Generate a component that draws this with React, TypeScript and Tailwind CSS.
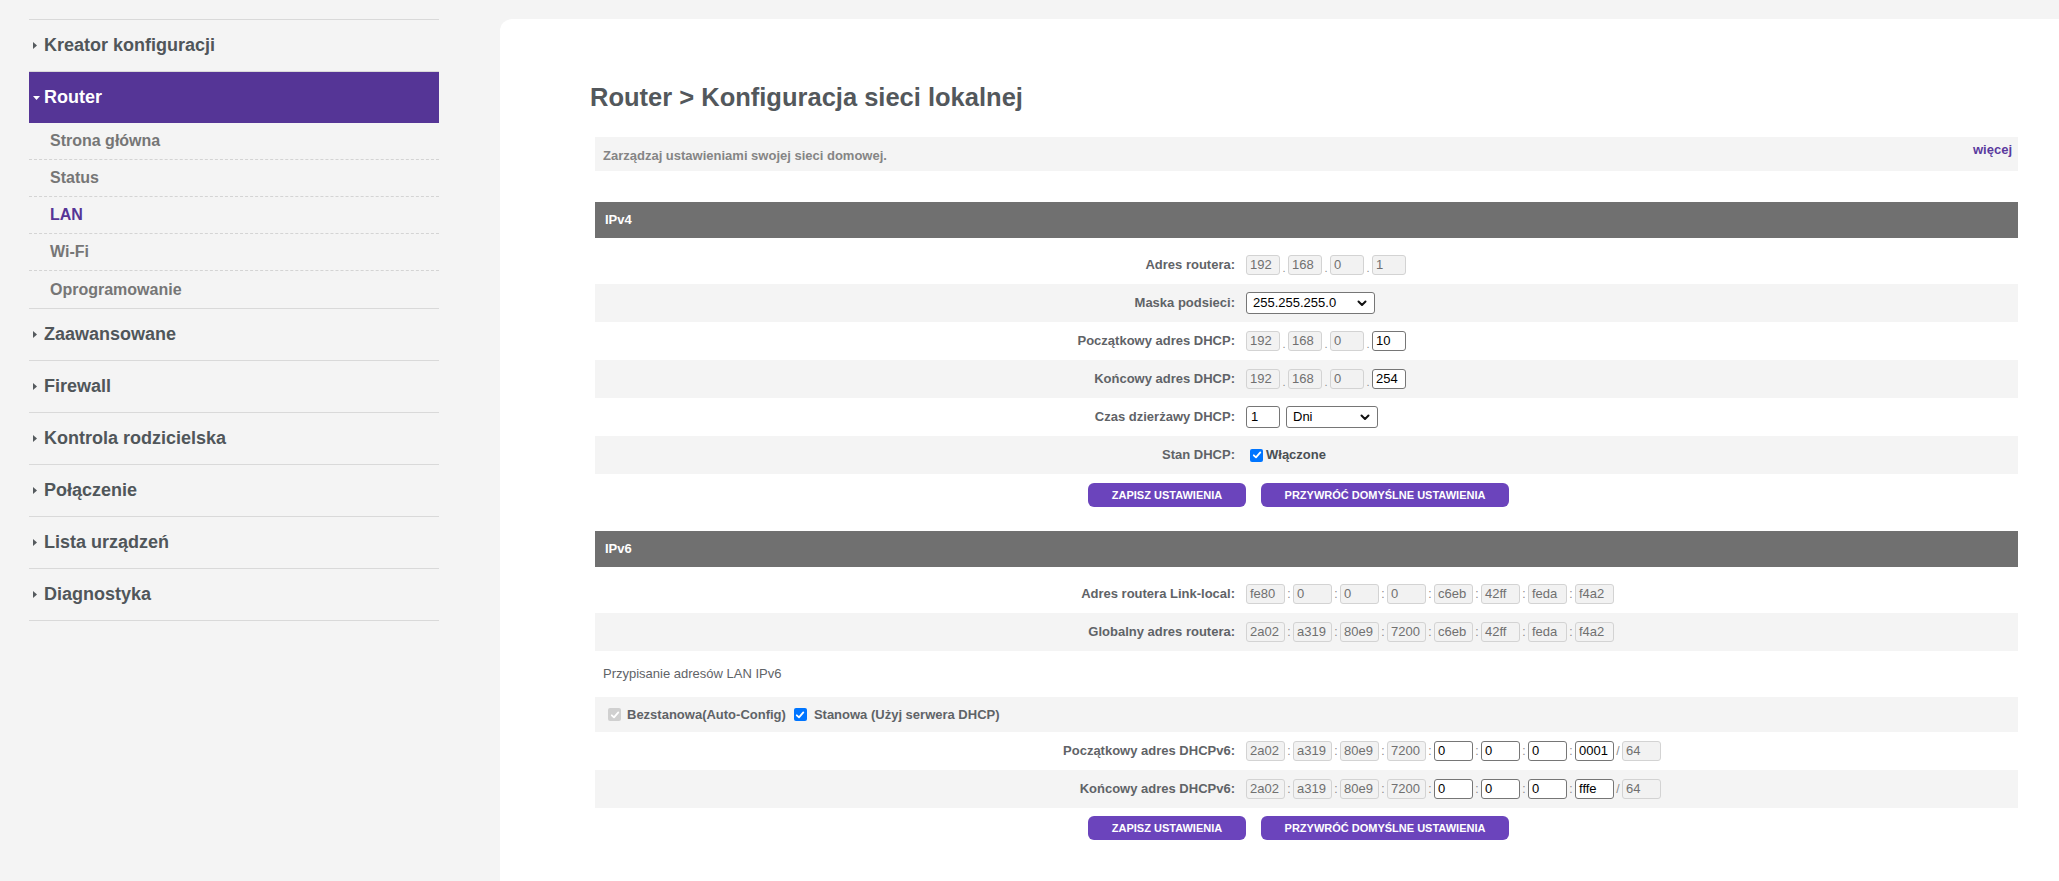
import React from "react";

type Cell = { v: string; on?: boolean };

const Box = ({ v, on, wide }: { v: string; on?: boolean; wide?: boolean }) => (
  <div
    className={[
      "h-[20px] rounded-[3px] border px-[3px] text-[13px] font-normal leading-[18px] whitespace-nowrap overflow-hidden",
      wide ? "w-[39px]" : "w-[34px]",
      on ? "border-[#767676] bg-white text-black" : "border-[#d3d3d3] bg-[#f2f2f2] text-[#707070]",
    ].join(" ")}
  >
    {v}
  </div>
);

const Dot = () => (
  <span className="flex h-[20px] w-[8px] items-end justify-center pb-[1px] text-[11px] leading-[11px] text-[#8a8a8a]">.</span>
);

const Colon = ({ ch = ":" }: { ch?: string }) => (
  <span className="flex h-[20px] w-[8px] items-center justify-center text-[12px] leading-[12px] text-[#8a8a8a]">{ch}</span>
);

const Chevron = () => (
  <svg width="10" height="7" viewBox="0 0 10 7" className="shrink-0">
    <path d="M1.5 1.5 L5 5 L8.5 1.5" fill="none" stroke="#111" strokeWidth="2" strokeLinecap="round" strokeLinejoin="round" />
  </svg>
);

const Select = ({ v, w }: { v: string; w: string }) => (
  <div
    className={`flex h-[22px] items-center justify-between rounded-[3px] border border-[#767676] bg-white pl-[6px] pr-[7px] text-[13px] font-normal text-black ${w}`}
  >
    <span>{v}</span>
    <Chevron />
  </div>
);

const Check = ({ disabled }: { disabled?: boolean }) => (
  <span
    className={`inline-flex h-[13px] w-[13px] shrink-0 items-center justify-center rounded-[2px] ${
      disabled ? "bg-[#d0d0d0]" : "bg-[#0075ff]"
    }`}
  >
    <svg viewBox="0 0 10 10" className="h-[10px] w-[10px]">
      <path d="M1.8 5.3 L4 7.4 L8.3 2.4" fill="none" stroke="#fff" strokeWidth="1.8" strokeLinecap="round" strokeLinejoin="round" />
    </svg>
  </span>
);

const Row = ({ label, gray, children }: { label: string; gray?: boolean; children: React.ReactNode }) => (
  <div className={`grid h-[38px] grid-cols-[651px_1fr] items-center ${gray ? "bg-[#f4f4f4]" : ""}`}>
    <div className="pr-[11px] text-right text-[13px] font-bold text-[#5f6367]">{label}</div>
    <div className="flex items-center">{children}</div>
  </div>
);

const Header = ({ title }: { title: string }) => (
  <div className="flex h-[36px] items-center bg-[#707070] pl-[10px] text-[13px] font-bold text-white">{title}</div>
);

const Buttons = () => (
  <div className="flex justify-center gap-[15px] pr-[16px]">
    <button className="h-[24px] w-[158px] rounded-[6px] bg-[#6b44bc] text-[11px] font-bold text-white">ZAPISZ USTAWIENIA</button>
    <button className="h-[24px] w-[248px] rounded-[6px] bg-[#6b44bc] text-[11px] font-bold text-white">PRZYWRÓĆ DOMYŚLNE USTAWIENIA</button>
  </div>
);

const Ipv4 = ({ parts }: { parts: Cell[] }) => (
  <>
    {parts.map((p, i) => (
      <React.Fragment key={i}>
        {i > 0 && <Dot />}
        <Box v={p.v} on={p.on} />
      </React.Fragment>
    ))}
  </>
);

const Ipv6 = ({ parts, prefix }: { parts: Cell[]; prefix?: boolean }) => (
  <>
    {parts.map((p, i) => (
      <React.Fragment key={i}>
        {i > 0 && <Colon />}
        <Box v={p.v} on={p.on} wide />
      </React.Fragment>
    ))}
    {prefix && (
      <>
        <Colon ch="/" />
        <Box v="64" wide />
      </>
    )}
  </>
);

const cells = (vals: string[], onFrom = 99): Cell[] => vals.map((v, i) => ({ v, on: i >= onFrom }));

const RightArrow = () => (
  <svg width="4" height="7" viewBox="0 0 4 7">
    <path d="M0 0 L4 3.5 L0 7 Z" fill="#555a5e" />
  </svg>
);

const DownArrow = () => (
  <svg width="7" height="4" viewBox="0 0 7 4">
    <path d="M0 0 L7 0 L3.5 4 Z" fill="#fff" />
  </svg>
);

const TopItem = ({ label }: { label: string }) => (
  <div className="flex h-[52px] items-center border-b border-[#d9d9d9] pl-[4px] text-[18px] font-bold text-[#50565a]">
    <span className="flex w-[11px] items-center">
      <RightArrow />
    </span>
    {label}
  </div>
);

const subItems = ["Strona główna", "Status", "LAN", "Wi-Fi", "Oprogramowanie"];

const Sidebar = () => (
  <aside className="w-[439px] shrink-0 pl-[29px] pt-[19px]">
    <div className="border-t border-[#d9d9d9]">
      <TopItem label="Kreator konfiguracji" />
      <div className="flex h-[51px] items-center bg-[#553596] pl-[4px] text-[18px] font-bold text-white">
        <span className="flex w-[11px] items-center">
          <DownArrow />
        </span>
        Router
      </div>
      <div className="border-b border-[#d9d9d9]">
        {subItems.map((s, i) => (
          <div
            key={s}
            className={`flex h-[37px] items-center pl-[21px] text-[16px] font-bold ${
              i < subItems.length - 1 ? "border-b border-dashed border-[#d4d4d4]" : "h-[36px]"
            } ${s === "LAN" ? "text-[#553596]" : "text-[#767676]"}`}
          >
            {s}
          </div>
        ))}
      </div>
      {["Zaawansowane", "Firewall", "Kontrola rodzicielska", "Połączenie", "Lista urządzeń", "Diagnostyka"].map((l) => (
        <TopItem key={l} label={l} />
      ))}
    </div>
  </aside>
);

export default function App() {
  return (
    <div className="flex h-[881px] overflow-hidden bg-[#f4f4f4] font-['Liberation_Sans',Arial,sans-serif]">
      <Sidebar />
      <main className="ml-[61px] mt-[19px] flex-1 rounded-tl-[12px] bg-white pl-[95px] pr-[41px] pt-[63px]">
        <h1 className="-ml-[5px] text-[25.5px] font-bold leading-[30px] text-[#53585c]">Router &gt; Konfiguracja sieci lokalnej</h1>

        <div className="mt-[25px] flex h-[34px] items-start justify-between bg-[#f4f4f4]">
          <span className="pl-[8px] pt-[9px] text-[13px] font-bold text-[#858585]">Zarządzaj ustawieniami swojej sieci domowej.</span>
          <span className="pr-[6px] pt-[3px] text-[13px] font-bold text-[#5a3a9e]">więcej</span>
        </div>

        <section className="mt-[31px]">
          <Header title="IPv4" />
          <div className="pt-[8px]">
            <Row label="Adres routera:">
              <Ipv4 parts={cells(["192", "168", "0", "1"])} />
            </Row>
            <Row label="Maska podsieci:" gray>
              <Select v="255.255.255.0" w="w-[129px]" />
            </Row>
            <Row label="Początkowy adres DHCP:">
              <Ipv4 parts={cells(["192", "168", "0", "10"], 3)} />
            </Row>
            <Row label="Końcowy adres DHCP:" gray>
              <Ipv4 parts={cells(["192", "168", "0", "254"], 3)} />
            </Row>
            <Row label="Czas dzierżawy DHCP:">
              <div className="flex items-center gap-[6px]">
                <div className="h-[22px] w-[34px] rounded-[3px] border border-[#767676] bg-white px-[4px] text-[13px] font-normal leading-[20px] text-black">1</div>
                <Select v="Dni" w="w-[92px]" />
              </div>
            </Row>
            <Row label="Stan DHCP:" gray>
              <div className="flex items-center gap-[3px] pl-[4px] text-[13px] font-bold text-[#4a4f53]">
                <Check />
                <span>Włączone</span>
              </div>
            </Row>
          </div>
          <div className="mt-[9px]">
            <Buttons />
          </div>
        </section>

        <section className="mt-[24px]">
          <Header title="IPv6" />
          <div className="pt-[8px]">
            <Row label="Adres routera Link-local:">
              <Ipv6 parts={cells(["fe80", "0", "0", "0", "c6eb", "42ff", "feda", "f4a2"])} />
            </Row>
            <Row label="Globalny adres routera:" gray>
              <Ipv6 parts={cells(["2a02", "a319", "80e9", "7200", "c6eb", "42ff", "feda", "f4a2"])} />
            </Row>
            <div className="flex h-[46px] items-center pl-[8px] text-[13px] text-[#5f6367]">Przypisanie adresów LAN IPv6</div>
            <div className="flex h-[35px] items-center bg-[#f4f4f4] pl-[13px] text-[13px] font-bold text-[#5f6367]">
              <Check disabled />
              <span className="ml-[6px]">Bezstanowa(Auto-Config)</span>
              <span className="ml-[8px] flex">
                <Check />
              </span>
              <span className="ml-[7px]">Stanowa (Użyj serwera DHCP)</span>
            </div>
            <Row label="Początkowy adres DHCPv6:">
              <Ipv6 parts={cells(["2a02", "a319", "80e9", "7200", "0", "0", "0", "0001"], 4)} prefix />
            </Row>
            <Row label="Końcowy adres DHCPv6:" gray>
              <Ipv6 parts={cells(["2a02", "a319", "80e9", "7200", "0", "0", "0", "fffe"], 4)} prefix />
            </Row>
          </div>
          <div className="mt-[8px]">
            <Buttons />
          </div>
        </section>
      </main>
    </div>
  );
}
